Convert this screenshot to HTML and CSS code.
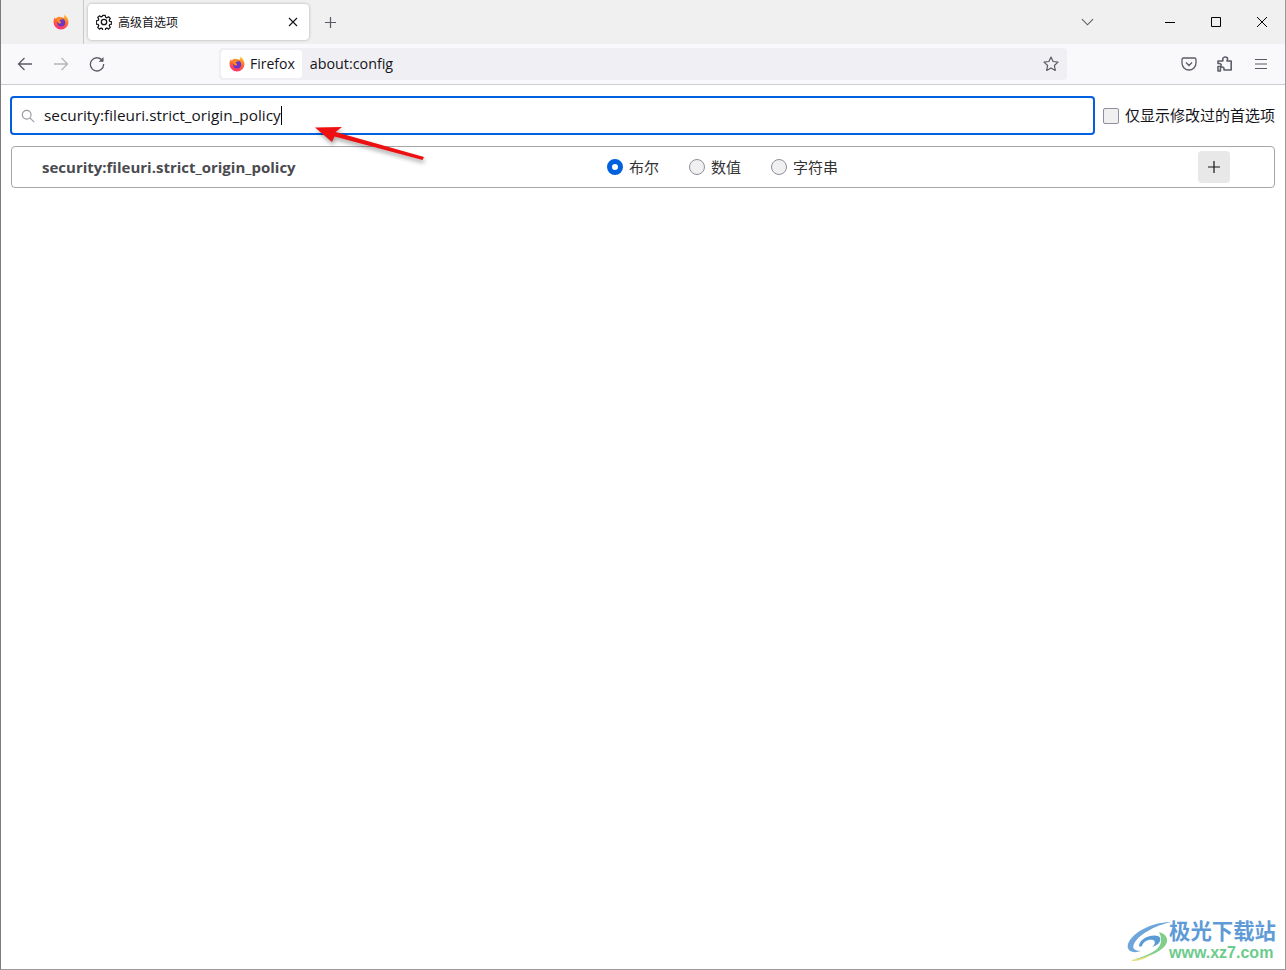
FILE: index.html
```html
<!DOCTYPE html>
<html lang="zh-CN">
<head>
    <meta charset="UTF-8">
    <title>高级首选项</title>
    <link rel="stylesheet" href="styles.css">
</head>
<body>
    <header class="tabbar">
        <div class="tab-pinned">
            <svg class="fx-logo" viewBox="0 0 16 16"><use href="#fx"/></svg>
        </div>
        <div class="tab">
            <svg class="gear" viewBox="0 0 16 16" fill="none" stroke="#15141a" stroke-width="1.300" stroke-linejoin="round">
                <path d="M6.700 1h2.600l.4 2 1.300.6 1.800-1.100 1.800 1.800-1.100 1.800.6 1.300 2 .4v2.400l-2 .4-.6 1.300 1.100 1.800-1.800 1.800-1.800-1.100-1.300.6-.4 2H6.700l-.4-2-1.300-.6-1.800 1.100-1.800-1.800 1.100-1.800-.6-1.300-2-.4V6.800l2-.4.6-1.300L1.400 3.300l1.800-1.800 1.800 1.100 1.300-.6z" transform="translate(.4 .4) scale(.95)"/>
                <circle cx="8" cy="8" r="2.700"/>
            </svg>
            <span class="tab-title">高级首选项</span>
            <svg class="tab-close" viewBox="0 0 10 10" stroke="#15141a" stroke-width="1.100"><path d="M1 1l8 8M9 1l-8 8"/></svg>
        </div>
        <svg class="new-tab" viewBox="0 0 14 14" stroke="#5b5b66" stroke-width="1.300"><path d="M7 1v12M1 7h12"/></svg>
        <div class="tabbar-spacer"></div>
        <svg class="tab-list" viewBox="0 0 14 8" fill="none" stroke="#5b5b66" stroke-width="1.200"><path d="M1 1l6 6 6-6"/></svg>
        <div class="window-buttons">
            <svg viewBox="0 0 12 12" stroke="#000" fill="none"><path d="M1 6.500h10"/></svg>
            <svg viewBox="0 0 12 12" stroke="#000" fill="none"><path d="M1.500 1.500h9v9h-9z"/></svg>
            <svg viewBox="0 0 12 12" stroke="#000" fill="none"><path d="M1 1l10 10M11 1L1 11"/></svg>
        </div>
    </header>

    <nav class="toolbar">
        <svg class="tool-icon" viewBox="0 0 16 16" fill="none" stroke="#5b5b66" stroke-width="1.300"><path d="M15 8H1.500M7.500 2l-6 6 6 6"/></svg>
        <svg class="tool-icon dim" viewBox="0 0 16 16" fill="none" stroke="#b5b5bb" stroke-width="1.300"><path d="M1 8h13.500M8.500 2l6 6-6 6"/></svg>
        <svg class="tool-icon" viewBox="0 0 16 16" fill="none" stroke="#5b5b66" stroke-width="1.300"><path d="M13.800 5.200A6.600 6.600 0 1 0 14.600 8"/><path d="M14.500 1v4.800H9.700z" fill="#5b5b66" stroke="none"/></svg>
        <div class="urlbar">
            <div class="identity">
                <svg class="fx-logo" viewBox="0 0 16 16"><use href="#fx"/></svg>
                <span class="identity-label">Firefox</span>
            </div>
            <span class="url">about:config</span>
            <svg class="star" viewBox="0 0 16 16" fill="none" stroke="#5b5b66" stroke-width="1.200" stroke-linejoin="round"><path d="M8 1l2.100 4.500 4.900.6-3.600 3.400.9 4.900L8 11.900l-4.300 2.500.9-4.900L1 6.100l4.900-.6z"/></svg>
        </div>
        <div class="toolbar-right">
            <svg viewBox="0 0 16 16" fill="none" stroke="#5b5b66" stroke-width="1.300" stroke-linejoin="round"><path d="M2.500 2h11A1.500 1.500 0 0 1 15 3.500V7a7 7 0 0 1-14 0V3.500A1.500 1.500 0 0 1 2.500 2z"/><path d="M5 6.500l3 3 3-3"/></svg>
            <svg viewBox="0 0 16 16" fill="none" stroke="#5b5b66" stroke-width="1.300" stroke-linejoin="round"><path d="M2 5h4V3a2 2 0 0 1 4 0c0 .8-.3 1.400-.6 2H13v9H7v-1.500a1.500 1.500 0 0 0-3 0V15H2v-4.500h1.200a1.500 1.500 0 0 0 0-3H2z" transform="matrix(1.200 0 0 1 -1.400 0)"/></svg>
            <svg viewBox="0 0 16 16" stroke="#5b5b66" stroke-width="1.200"><path d="M2 3.500h12M2 8h12M2 12.500h12"/></svg>
        </div>
    </nav>

    <main class="config">
        <div class="search-row">
            <div class="search-box">
                <svg class="search-icon" viewBox="0 0 16 16" fill="none" stroke="#9a9aa0" stroke-width="1.300"><circle cx="6.500" cy="6.500" r="5"/><path d="M10.200 10.200l4.800 4.800"/></svg>
                <span class="search-text">security:fileuri.strict_origin_policy</span><span class="caret"></span>
            </div>
            <label class="modified-only">
                <span class="checkbox"></span>
                <span class="modified-label">仅显示修改过的首选项</span>
            </label>
        </div>

        <div class="pref-row">
            <span class="pref-name">security:fileuri.strict_origin_policy</span>
            <div class="pref-types">
                <span class="radio-item"><span class="radio checked"></span><span class="radio-label">布尔</span></span>
                <span class="radio-item"><span class="radio"></span><span class="radio-label">数值</span></span>
                <span class="radio-item"><span class="radio"></span><span class="radio-label">字符串</span></span>
            </div>
            <div class="add-btn">
                <svg viewBox="0 0 12 12" stroke="#15141a" stroke-width="1.200"><path d="M6 0v12M0 6h12"/></svg>
            </div>
        </div>
    </main>

    <!-- red arrow drawn on top of the screenshot -->
    <svg class="arrow" width="130" height="50" viewBox="0 0 130 50">
        <path d="M11 3.500l27-.5-6.500 5 88.500 25-1.500 3-88-23.500-2.500 5.500z" fill="#ee1010"/>
    </svg>

    <!-- watermark -->
    <div class="watermark">
        <svg class="wm-logo" viewBox="0 0 46 40" fill="none">
            <path d="M45 1C28 1 7 10 2 23c-2 7 5 10 13 7-7 0-9-3-7-7C12 14 28 5 45 1z" fill="#6ea6dc"/>
            <path d="M13 24c2-7 12-11 19-9 5 2 2 9-6 11 3-2 4-6 1-7-5-1-10 2-11 6-1 1-3 1-3-1z" fill="#5b9bd5"/>
            <path d="M33 11c8 2 11 9 5 15-6 6-18 11-32 13 11-3 25-8 28-15 2-4 1-9-1-13z" fill="#7fcf8a"/>
            <path d="M6 39c7-1 14-3 20-6-5 4-12 7-20 7z" fill="#e3dc6a"/>
        </svg>
        <div class="wm-text">
            <div class="wm-cn">极光下载站</div>
            <div class="wm-url">www.xz7.com</div>
        </div>
    </div>

    <svg class="defs" width="0" height="0">
        <defs>
            <linearGradient id="fxo" x1=".7" y1="0" x2=".4" y2="1">
                <stop offset="0" stop-color="#ffc92e"/>
                <stop offset=".5" stop-color="#ff6a2b"/>
                <stop offset="1" stop-color="#ff2d78"/>
            </linearGradient>
            <symbol id="fx" viewBox="0 0 16 16">
                <path d="M11.500.3c.3 1.200 3.800 3 4 7.700A7.500 7.500 0 0 1 .5 8c0-2 .5-3.500 1.500-4.700 0 .7.300 1.200.7 1.500C3.500 3 5.500 2.500 7 2.700c1.500.1 3 .8 3.500 1.300.6-1 1-2.200 1-3.700z" fill="url(#fxo)"/>
                <circle cx="8.200" cy="8.400" r="4" fill="#6b35c9"/>
                <path d="M3.800 5.600C5.600 3.900 8.800 4 10.200 5.700 8.800 5.200 7.200 5.500 6.800 6.400c-.3.800.5 1.300 1.400 1.300.2 1.200-1 2.200-2.200 1.700-1.100-.5-2.500-2.200-2.200-3.800z" fill="#ff8a1e"/>
            </symbol>
        </defs>
    </svg>
</body>
</html>
```

FILE: styles.css
```css
:root {
    --tabbar-bg: #f0f0f1;
    --toolbar-bg: #f9f9fb;
    --field-bg: #f0f0f4;
    --accent: #0060df;
    --text-color: #15141a;
    --ui-font: "Open Sans", "Noto Sans CJK SC", sans-serif;
}
html, body {
    height: 100%;
}
body {
    margin: 0;
    background-color: #fff;
    color: var(--text-color);
    font-family: var(--ui-font);
    font-size: 14px;
    overflow: hidden;
    box-sizing: border-box;
    border-left: 1px solid #7c7c7c;
    border-right: 1px solid #9a9a9a;
    border-bottom: 1px solid #9a9a9a;
}
svg {
    display: block;
}

/* tab strip */
.tabbar {
    display: flex;
    align-items: center;
    height: 44px;
    background-color: var(--tabbar-bg);
}
.tab-pinned {
    display: flex;
    align-items: center;
    justify-content: center;
    width: 83px;
    height: 44px;
    padding-left: 37px;
    box-sizing: border-box;
    border-right: 1px solid #c8c8c8;
}
.fx-logo {
    width: 16px;
    height: 16px;
}
.tab {
    display: flex;
    align-items: center;
    width: 221px;
    height: 36px;
    margin-left: 4px;
    padding: 0 11px 0 8px;
    box-sizing: border-box;
    background-color: #fff;
    border-radius: 4px;
    box-shadow: 0 0 3px rgba(0, 0, 0, 0.3);
}
.gear {
    width: 16px;
    height: 16px;
    margin-right: 6px;
}
.tab-title {
    flex: 1;
    font-size: 12px;
}
.tab-close {
    width: 10px;
    height: 10px;
}
.new-tab {
    width: 13px;
    height: 13px;
    margin-left: 15px;
}
.tabbar-spacer {
    flex: 1;
}
.tab-list {
    width: 13px;
    height: 8px;
    margin-right: 70px;
}
.window-buttons {
    display: flex;
    align-items: center;
    gap: 34px;
    margin-right: 17px;
}
.window-buttons svg {
    width: 12px;
    height: 12px;
}

/* nav toolbar */
.toolbar {
    display: flex;
    align-items: center;
    height: 41px;
    box-sizing: border-box;
    padding-left: 16px;
    background-color: var(--toolbar-bg);
    border-bottom: 1px solid #ccc;
}
.tool-icon {
    width: 16px;
    height: 16px;
    margin-right: 20px;
}
.urlbar {
    display: flex;
    align-items: center;
    width: 848px;
    height: 32px;
    margin-left: 94px;
    padding: 2px;
    box-sizing: border-box;
    background-color: var(--field-bg);
    border-radius: 4px;
}
.identity {
    display: flex;
    align-items: center;
    gap: 5px;
    height: 28px;
    padding: 0 7px 0 8px;
    background-color: #fff;
    border-radius: 4px;
}
.identity-label {
    margin-bottom: 2px;
}
.url {
    flex: 1;
    margin: 0 0 2px 8px;
    font-size: 14.300px;
}
.star {
    width: 16px;
    height: 16px;
    margin-right: 6px;
}
.toolbar-right {
    display: flex;
    gap: 20px;
    margin-left: 114px;
}
.toolbar-right svg {
    width: 16px;
    height: 16px;
}

/* about:config content */
.config {
    padding: 11px 10px 0 9px;
}
.search-row {
    display: flex;
    align-items: center;
}
.search-box {
    display: flex;
    align-items: center;
    width: 1085px;
    height: 39px;
    padding-left: 9px;
    box-sizing: border-box;
    border: 2px solid var(--accent);
    border-radius: 4px;
}
.search-icon {
    width: 14px;
    height: 14px;
    margin-right: 9px;
}
.search-text {
    font-size: 15.350px;
    margin-bottom: 2px;
}
.caret {
    width: 1px;
    height: 19px;
    background-color: #000;
}
.modified-only {
    display: flex;
    align-items: center;
    gap: 6px;
    margin-left: 8px;
    white-space: nowrap;
    font-size: 15px;
}
.modified-label {
    margin-bottom: 2px;
}
.checkbox {
    width: 14px;
    height: 14px;
    background-color: #f0f0f0;
    border: 1px solid #8f8f9d;
    border-radius: 2px;
}
.pref-row {
    display: flex;
    align-items: center;
    height: 42px;
    margin: 11px 0 0 1px;
    padding-left: 30px;
    box-sizing: border-box;
    border: 1px solid #a6a6a6;
    border-radius: 4px;
}
.pref-name {
    width: 565px;
    font-size: 15px;
    font-weight: 700;
    color: #4a4a4f;
}
.pref-types {
    display: flex;
    gap: 30px;
}
.radio-item {
    display: flex;
    align-items: center;
    gap: 6px;
    font-size: 15px;
    color: #333;
}
.radio-label {
    margin-bottom: 2px;
}
.radio {
    width: 14px;
    height: 14px;
    background-color: #f0f0f0;
    border: 1px solid #8f8f9d;
    border-radius: 50%;
}
.radio.checked {
    width: 6px;
    height: 6px;
    background-color: #fff;
    border: 5px solid var(--accent);
}
.add-btn {
    display: flex;
    align-items: center;
    justify-content: center;
    width: 32px;
    height: 32px;
    margin-left: 360px;
    background-color: #e8e8e8;
    border-radius: 4px;
}
.add-btn svg {
    width: 12px;
    height: 12px;
}

/* overlays */
.arrow {
    position: absolute;
    left: 304px;
    top: 124px;
    filter: drop-shadow(1px 3px 2px rgba(0, 0, 0, 0.35));
}
.watermark {
    position: absolute;
    right: 10px;
    bottom: 9px;
    display: flex;
    align-items: center;
}
.wm-logo {
    width: 46px;
    height: 40px;
    margin-right: -3px;
    margin-left: -2px;
}
.wm-cn {
    font-family: "Noto Sans CJK SC", sans-serif;
    font-size: 21.400px;
    font-weight: 700;
    line-height: 26px;
    margin-top: -4px;
    color: #5f9bd6;
}
.wm-url {
    font-family: "Liberation Sans", sans-serif;
    font-size: 16px;
    font-weight: 700;
    line-height: 17px;
    margin-top: 1px;
    color: #6ccb8c;
}
.defs {
    position: absolute;
}
```
